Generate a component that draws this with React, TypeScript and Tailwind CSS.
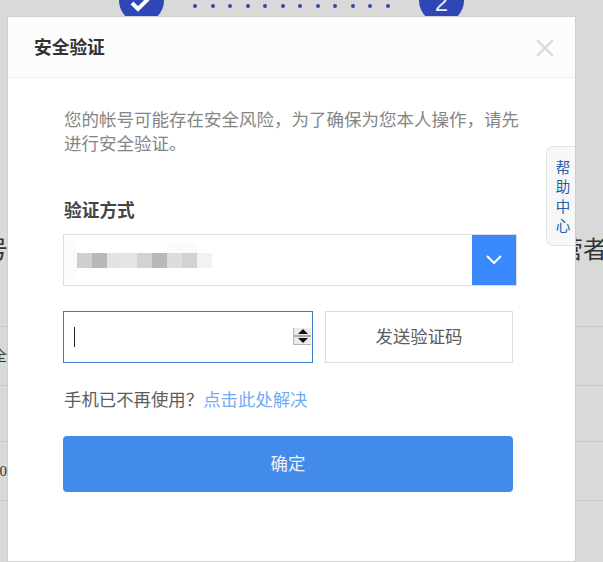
const FONT = { fontFamily: '"Liberation Serif", "Noto Sans CJK SC", serif' };

const mosaic = ["#cfcfcf", "#b9b9b9", "#e3e3e3", "#e5e5e5", "#d2d2d2", "#b9b9b9", "#dddddd", "#d2d2d2", "#f2f2f2"];

function Backdrop() {
  return (
    <div className="h-[562px] overflow-hidden text-[#333]">
      <div className="-mt-[23px] flex h-[46px] items-center justify-center pr-[20px]">
        <div className="flex h-[45px] w-[45px] items-end justify-center rounded-full bg-[#2f47b5] pb-[10px] pr-[3px]">
          <svg width="20" height="16" viewBox="0 0 20 16" fill="none" stroke="#fff" strokeWidth="4">
            <path d="M2 6 L8 12 L18 2" />
          </svg>
        </div>
        <div className="mx-[29px] mt-[12px] flex w-[197px] justify-between">
          {Array.from({ length: 12 }).map((_, i) => (
            <span key={i} className="h-[4px] w-[4px] rounded-full bg-[#2f47b5]" />
          ))}
        </div>
        <div className="flex h-[45px] w-[45px] items-end justify-center rounded-full bg-[#2f47b5] pb-[8px] font-['Liberation_Sans'] text-[24px] font-light leading-[24px] text-[#e8ebf8]">
          2
        </div>
      </div>
      <div className="mt-[212px] flex h-[30px] items-center justify-between text-[24px] leading-[30px]">
        <span className="-ml-[16px]">号</span>
        <span className="-mr-[4px]">经营者</span>
      </div>
      <div className="mt-[61px] h-[59px] border-t border-[#c8c8c8] pt-[18px] text-[15px]">
        <span className="-ml-[8px] inline-block">全</span>
      </div>
      <div className="h-[56px] border-t border-[#c8c8c8]" />
      <div className="h-[59px] border-t border-[#c8c8c8] pt-[18px] text-[15px]">
        <span className="-ml-[8px] inline-block">10</span>
      </div>
      <div className="border-t border-[#c8c8c8]" />
    </div>
  );
}

function Spinner() {
  return (
    <div className="mb-[2px] flex h-[17px] w-[18px] flex-col border-b border-l border-[#b5b5b5] bg-[#ececec]">
      <div className="flex h-[7px] items-center justify-center">
        <svg width="10" height="5" viewBox="0 0 10 5">
          <path d="M5 0 L10 5 L0 5 Z" fill="#111" />
        </svg>
      </div>
      <div className="h-[2px] bg-[#a8a8a8]" />
      <div className="flex h-[7px] items-center justify-center">
        <svg width="10" height="5" viewBox="0 0 10 5">
          <path d="M0 0 L10 0 L5 5 Z" fill="#111" />
        </svg>
      </div>
    </div>
  );
}

function Modal() {
  return (
    <div className="absolute left-[7px] top-[16px] h-[546px] w-[569px] border border-[#cfcfcf] bg-white">
      <div className="flex h-[61px] items-center justify-between border-b border-[#eeeeee] bg-[#fcfcfc] pl-[26px] pr-[21px]">
        <h2 className="pt-px text-[17.7px] font-bold leading-6 text-[#333]">安全验证</h2>
        <svg className="mt-[2px]" width="18" height="18" viewBox="0 0 18 18" stroke="#d8d8d8" strokeWidth="2" fill="none">
          <path d="M1 1 L17 17 M17 1 L1 17" />
        </svg>
      </div>

      <div className="pl-[55px] pt-[30px]">
        <p className="ml-px w-[460px] text-[17.5px] leading-6 text-[#858585]">
          您的帐号可能存在安全风险，为了确保为您本人操作，请先进行安全验证。
        </p>
        <h3 className="ml-px mt-[43px] text-[17.7px] font-bold leading-6 text-[#444]">验证方式</h3>

        <div className="mt-[11px] flex h-[52px] w-[454px] items-stretch justify-between border border-[#dddddd]">
          <div className="relative flex flex-1 items-center pl-[13px]">
            <div className="absolute left-0 top-[5px] h-[40px] w-[13px] rounded-r-full bg-[#fbfbfb]" />
            <div className="absolute left-[103px] top-[8px] h-[10px] w-[30px] bg-[#fbfbfb]" />
            {mosaic.map((c, i) => (
              <div key={i} className="h-[15px] w-[15px]" style={{ backgroundColor: c }} />
            ))}
          </div>
          <div className="flex w-[44px] items-center justify-center bg-[#3a88fd] pb-[2px]">
            <svg width="16" height="9" viewBox="0 0 16 9" fill="none" stroke="#fff" strokeWidth="2">
              <path d="M1 1 L8 8 L15 1" />
            </svg>
          </div>
        </div>

        <div className="mt-[25px] flex gap-[12px]">
          <div className="flex h-[52px] w-[250px] items-center justify-between border border-[#3a78c8] pl-[10px] pr-px">
            <div className="h-[20px] w-px bg-[#222]" />
            <Spinner />
          </div>
          <button className="h-[52px] w-[188px] border border-[#dddddd] text-[17.4px] text-[#5c5c5c]">发送验证码</button>
        </div>

        <p className="ml-px mt-[25px] text-[17.4px] leading-6 text-[#5c5c5c]">
          手机已不再使用？<a className="text-[#74aaf6]">点击此处解决</a>
        </p>

        <button className="mt-[24px] h-[56px] w-[450px] rounded-[4px] bg-[#428bea] pt-px text-[17.4px] text-[#f2f2f2]">确定</button>
      </div>

      <div className="absolute right-0 top-[129px] flex h-[100px] w-[29px] flex-col items-center justify-center rounded-l-lg border border-r-0 border-[#e4e4e4] bg-[#f7f7f7] pl-[4px] pt-[3px] text-[14.5px] leading-[19.3px] text-[#1e5fa8]">
        <span>帮</span>
        <span>助</span>
        <span>中</span>
        <span>心</span>
      </div>
    </div>
  );
}

export default function App() {
  return (
    <div className="relative h-[562px] w-[603px] overflow-hidden bg-[#d9d9d9]" style={FONT}>
      <Backdrop />
      <Modal />
    </div>
  );
}
